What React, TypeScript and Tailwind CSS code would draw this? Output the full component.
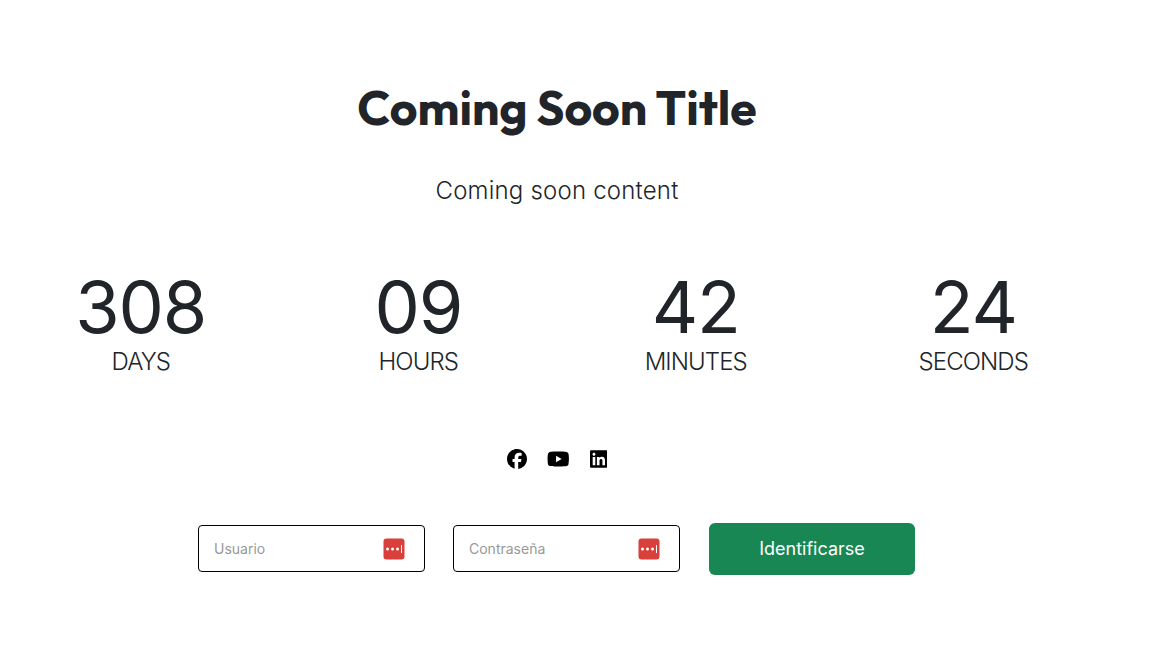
import { FaFacebook, FaLinkedin, FaYoutube } from "react-icons/fa6";

const COUNTDOWN = [
  { value: "308", label: "DAYS" },
  { value: "09", label: "HOURS" },
  { value: "42", label: "MINUTES" },
  { value: "24", label: "SECONDS" },
];

function Counter({ value, label }: { value: string; label: string }) {
  return (
    <div className="text-center">
      <p className="text-[72px] leading-[81px] tracking-[-1.2px]">{value}</p>
      <p className="text-2xl leading-[29px] font-light tracking-[-0.9px]">
        {label}
      </p>
    </div>
  );
}

function VaultIcon() {
  return (
    <svg width="22" height="22" viewBox="0 0 22 22" className="shrink-0">
      <rect x="0.5" y="0.5" width="21" height="21" rx="3" fill="#d93f3b" />
      <circle cx="4.5" cy="11" r="1.5" fill="#fff" />
      <circle cx="9.5" cy="11" r="1.5" fill="#fff" />
      <circle cx="14.5" cy="11" r="1.5" fill="#fff" />
      <rect x="18" y="7" width="1" height="8" fill="#fff" />
    </svg>
  );
}

function Field({ type, placeholder }: { type: string; placeholder: string }) {
  return (
    <div className="mt-0.5 flex h-[47px] w-[227px] items-center rounded border border-black pr-[19px] pl-[15px]">
      <input
        type={type}
        placeholder={placeholder}
        className="min-w-0 flex-1 text-sm placeholder:text-[#999] focus:outline-none"
      />
      <VaultIcon />
    </div>
  );
}

export default function App() {
  return (
    <main className="flex h-[650px] w-full flex-col bg-white font-['Inter',sans-serif] text-[#212529]">
      <div className="flex w-[1114px] flex-col items-center">
        <h1 className="mt-[78px] font-['Outfit','Lato',sans-serif] text-5xl leading-[58px] font-bold [font-variant-ligatures:none]">
          Coming Soon Title
        </h1>
        <p className="mt-[37px] text-2xl leading-9 font-light tracking-[0.2px]">
          Coming soon content
        </p>
        <div className="mt-[57px] grid w-[1110px] grid-cols-4">
          {COUNTDOWN.map((c) => (
            <Counter key={c.label} {...c} />
          ))}
        </div>
        <div className="mt-[71px] flex h-6 items-center gap-5 text-black">
          <FaFacebook className="h-5 w-5" />
          <FaYoutube className="h-5 w-[22.5px]" />
          <FaLinkedin className="h-5 w-[17.5px]" />
        </div>
        <form className="mt-[52px] mr-px flex items-start">
          <Field type="text" placeholder="Usuario" />
          <div className="ml-7">
            <Field type="password" placeholder="Contraseña" />
          </div>
          <button
            type="button"
            className="ml-[29px] h-[52px] w-[206px] rounded-md bg-[#198754] text-lg text-white"
          >
            Identificarse
          </button>
        </form>
      </div>
    </main>
  );
}
